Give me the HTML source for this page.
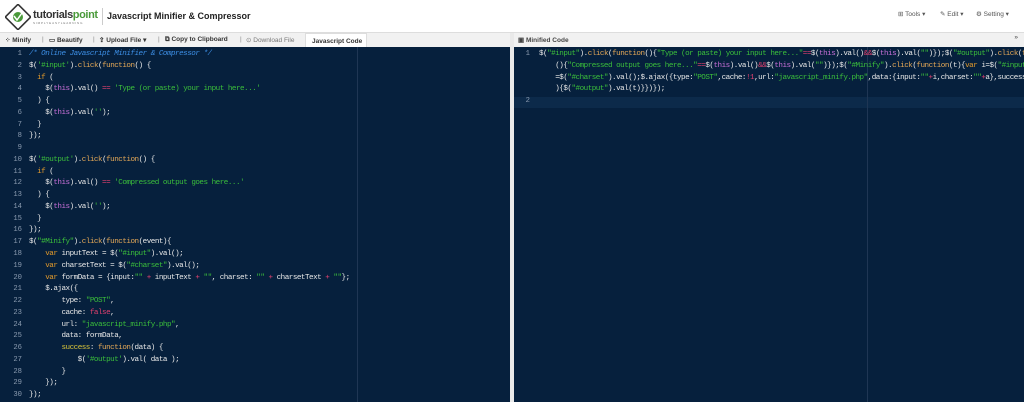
<!DOCTYPE html>
<html><head><meta charset="utf-8"><style>
*{margin:0;padding:0;box-sizing:border-box}
body{width:1024px;height:402px;overflow:hidden;background:#e9e9e9;font-family:"Liberation Sans",sans-serif;position:relative}
.hdr{position:absolute;left:0;top:0;width:1024px;height:33px;background:#fff;border-bottom:1px solid #ddd}
.title{position:absolute;left:107px;top:11px;font-size:9px;font-weight:bold;color:#222;white-space:nowrap}
.sep{position:absolute;left:102px;top:8px;width:1px;height:17px;background:#ccc}
.menu{position:absolute;top:10px;font-size:6.5px;color:#555;white-space:nowrap}
.tb{position:absolute;left:0;top:33px;width:510px;height:14px;background:#f1f1f1;font-size:6.5px;color:#333;font-weight:bold;white-space:nowrap}
.tb span{position:absolute;top:3px}
.tab{position:absolute;left:305px;top:33px;width:62px;height:14px;background:#fff;border:1px solid #ddd;border-bottom:none;font-size:6.5px;font-weight:bold;color:#333;padding:4px 0 0 6px;white-space:nowrap}
.rh{position:absolute;left:514px;top:33px;width:510px;height:14px;background:#f1f1f1;font-size:6.5px;font-weight:bold;color:#444;white-space:nowrap}
.ed{position:absolute;top:47px;height:355px;background:#06203d;overflow:hidden}
.code{position:absolute;top:49px;font-family:"Liberation Mono",monospace;font-size:7.6px;letter-spacing:-0.5px;line-height:11.76px;color:#e8e8e8;white-space:pre}
.ln{position:absolute;top:49px;font-family:"Liberation Mono",monospace;font-size:7.2px;line-height:11.76px;color:#8b9bb0;text-align:right;white-space:pre}
.c{color:#3d8fe6;font-style:italic}.s{color:#3bbf3b}.k{color:#e39a2b}.t{color:#c66fd6}.f{color:#e6a957}.o{color:#e0406e}.y{color:#d8c43a}
</style></head><body>
<div class="hdr">
<svg style="position:absolute;left:5px;top:4px" width="26" height="26" viewBox="0 0 26 26"><rect x="4" y="4" width="18" height="18" transform="rotate(45 13 13)" fill="#fff" stroke="#333" stroke-width="1.6"/><circle cx="13" cy="13" r="5" fill="#4a9a3a"/><path d="M9 12l3 4 5-7" stroke="#fff" stroke-width="1.5" fill="none"/></svg>
<div style="position:absolute;left:33px;top:9px;font-size:11px;font-weight:bold;color:#333;letter-spacing:-0.4px">tutorials<span style="color:#4a9a3a">point</span></div>
<div style="position:absolute;left:33px;top:21px;font-size:3px;color:#777;letter-spacing:0.9px">SIMPLYEASYLEARNING</div>
<div class="sep"></div>
<div class="title">Javascript Minifier &amp; Compressor</div>
<div class="menu" style="left:898px">⊞ Tools ▾</div>
<div class="menu" style="left:940px">✎ Edit ▾</div>
<div class="menu" style="left:976px">⚙ Setting ▾</div>
</div>
<div class="tb"><span style="left:5px">⁘ Minify</span><span style="left:42px;color:#888;font-weight:normal">|</span><span style="left:49px">▭ Beautify</span><span style="left:93px;color:#888;font-weight:normal">|</span><span style="left:99px">⇪ Upload File ▾</span><span style="left:158px;color:#888;font-weight:normal">|</span><span style="left:165px">⧉ Copy to Clipboard</span><span style="left:240px;color:#888;font-weight:normal">|</span><span style="left:246px;color:#777;font-weight:normal">⊙ Download File</span></div>
<div class="tab">Javascript Code</div>
<div class="rh"><span style="position:absolute;left:4px;top:3px">▣ Minified Code</span><span style="position:absolute;right:6px;top:1px;font-weight:normal">»</span></div>
<div class="ed" style="left:0;width:510px"><div style="position:absolute;left:357px;top:0;width:1px;height:355px;background:#1f3654"></div></div>
<div class="ed" style="left:514px;width:510px"><div style="position:absolute;left:0;top:50px;width:510px;height:11px;background:#0c2a4a"></div><div style="position:absolute;left:353px;top:0;width:1px;height:355px;background:#1f3654"></div></div>
<div class="ln" style="left:6px;width:16px">1
2
3
4
5
6
7
8
9
10
11
12
13
14
15
16
17
18
19
20
21
22
23
24
25
26
27
28
29
30</div>
<div class="code" style="left:29px"><span class="c">/* Online Javascript Minifier &amp; Compressor */</span>
$(<span class="s">'#input'</span>).<span class="f">click</span>(<span class="f">function</span>() {
  <span class="k">if</span> (
    $(<span class="t">this</span>).val() <span class="o">==</span> <span class="s">'Type (or paste) your input here...'</span>
  ) {
    $(<span class="t">this</span>).val(<span class="s">''</span>);
  }
});

$(<span class="s">'#output'</span>).<span class="f">click</span>(<span class="f">function</span>() {
  <span class="k">if</span> (
    $(<span class="t">this</span>).val() <span class="o">==</span> <span class="s">'Compressed output goes here...'</span>
  ) {
    $(<span class="t">this</span>).val(<span class="s">''</span>);
  }
});
$(<span class="s">"#Minify"</span>).<span class="f">click</span>(<span class="f">function</span>(event){
    <span class="k">var</span> inputText = $(<span class="s">"#input"</span>).val();
    <span class="k">var</span> charsetText = $(<span class="s">"#charset"</span>).val();
    <span class="k">var</span> formData = {input:<span class="s">""</span> <span class="o">+</span> inputText <span class="o">+</span> <span class="s">""</span>, charset: <span class="s">""</span> <span class="o">+</span> charsetText <span class="o">+</span> <span class="s">""</span>};
    $.ajax({
        type: <span class="s">"POST"</span>,
        cache: <span class="o">false</span>,
        url: <span class="s">"javascript_minify.php"</span>,
        data: formData,
        <span class="y">success</span>: <span class="f">function</span>(data) {
            $(<span class="s">'#output'</span>).val( data );
        }
    });
});</div>
<div class="ln" style="left:520px;width:10px">1



2</div>
<div class="code" style="left:539px">$(<span class="s">"#input"</span>).<span class="f">click</span>(<span class="f">function</span>(){<span class="s">"Type (or paste) your input here..."</span><span class="o">==</span>$(<span class="t">this</span>).val()<span class="o">&amp;&amp;</span>$(<span class="t">this</span>).val(<span class="s">""</span>)});$(<span class="s">"#output"</span>).<span class="f">click</span>(<span class="f">function</span>
    (){<span class="s">"Compressed output goes here..."</span><span class="o">==</span>$(<span class="t">this</span>).val()<span class="o">&amp;&amp;</span>$(<span class="t">this</span>).val(<span class="s">""</span>)});$(<span class="s">"#Minify"</span>).<span class="f">click</span>(<span class="f">function</span>(t){<span class="k">var</span> i=$(<span class="s">"#input"</span>).val(),a
    =$(<span class="s">"#charset"</span>).val();$.ajax({type:<span class="s">"POST"</span>,cache:<span class="o">!1</span>,url:<span class="s">"javascript_minify.php"</span>,data:{input:<span class="s">""</span><span class="o">+</span>i,charset:<span class="s">""</span><span class="o">+</span>a},success:<span class="f">function</span>(t
    ){$(<span class="s">"#output"</span>).val(t)}})});
</div>
</body></html>
